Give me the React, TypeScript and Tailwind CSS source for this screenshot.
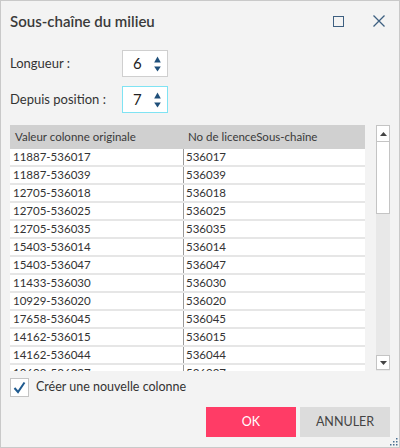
const ROWS: [string, string][] = [
  ["11887-536017", "536017"],
  ["11887-536039", "536039"],
  ["12705-536018", "536018"],
  ["12705-536025", "536025"],
  ["12705-536035", "536035"],
  ["15403-536014", "536014"],
  ["15403-536047", "536047"],
  ["11433-536030", "536030"],
  ["10929-536020", "536020"],
  ["17658-536045", "536045"],
  ["14162-536015", "536015"],
  ["14162-536044", "536044"],
  ["10609-536027", "536027"],
];

const Spin = ({ value, focused }: { value: string; focused?: boolean }) => (
  <div
    className={`w-[46px] h-[27px] bg-white flex items-center border ${focused ? "border-[#7fe3f3]" : "border-[#cfcfcf]"}`}
  >
    <span className="flex-1 pl-[10px] text-[15px] text-[#222]">{value}</span>
    <div className="flex flex-col items-center pr-[6px] gap-[3px]">
      <svg width="7" height="7" viewBox="0 0 7 7"><path d="M3.5 0.5 L6.8 6.5 L0.2 6.5 Z" fill="#1f4f7a" /></svg>
      <svg width="7" height="6" viewBox="0 0 7 6"><path d="M0.2 0.5 L6.8 0.5 L3.5 5.5 Z" fill="#1f4f7a" /></svg>
    </div>
  </div>
);

export default function App() {
  return (
    <div className="w-[400px] h-[448px] border border-[#c9c9c9] bg-[#f3f3f3] flex flex-col font-['Lato',sans-serif] text-[#333] relative overflow-hidden">
      {/* title bar */}
      <div className="h-[40px] flex items-center pl-[9px] pr-[14px] shrink-0">
        <span className="flex-1 text-[15px] font-semibold text-[#3a3a3a]">Sous-chaîne du milieu</span>
        <div className="w-[11px] h-[11px] border-[1.5px] border-[#3d5f80] mr-[29px]" />
        <svg width="12" height="12" viewBox="0 0 12 12">
          <path d="M0.5 0.5 L11.5 11.5 M11.5 0.5 L0.5 11.5" stroke="#3d5f80" strokeWidth="1.3" />
        </svg>
      </div>

      {/* inputs */}
      <div className="flex flex-col gap-[9px] pl-[9px] mt-[9px]">
        <div className="flex items-center">
          <span className="w-[112px] text-[13px]">Longueur :</span>
          <Spin value="6" />
        </div>
        <div className="flex items-center">
          <span className="w-[112px] text-[13px]">Depuis position :</span>
          <Spin value="7" focused />
        </div>
      </div>

      {/* table + scrollbar */}
      <div className="flex mt-[12px] pl-[9px] pr-[9px] gap-[11px]">
        <div className="w-[357px] h-[246px] overflow-hidden">
          <div className="h-[24px] bg-[#d0d0d0] flex items-center text-[11.5px] text-[#3a3a3a]">
            <span className="w-[173px] pl-[5px]">Valeur colonne originale</span>
            <span className="pl-[5px]">No de licenceSous-chaîne</span>
          </div>
          {ROWS.map(([a, b]) => (
            <div key={a} className="h-[18px] flex text-[11.5px] text-[#333] border-b-[2px] border-[#e6e6e6]">
              <span className="w-[173px] bg-white pl-[3px] leading-[16px]">{a}</span>
              <span className="flex-1 bg-white pl-[2px] leading-[16px] border-l border-[#9a9a9a]">{b}</span>
            </div>
          ))}
        </div>
        <div className="w-[14px] h-[246px] flex flex-col bg-[#e8e8e8]">
          <div className="h-[17px] bg-white border border-[#c4c4c4] flex items-center justify-center">
            <svg width="7" height="4" viewBox="0 0 7 4"><path d="M0 4 L3.5 0 L7 4 Z" fill="#444" /></svg>
          </div>
          <div className="h-[72px] bg-white border border-t-0 border-[#c4c4c4]" />
          <div className="flex-1" />
          <div className="h-[15px] mb-[1px] bg-white border border-[#c4c4c4] flex items-center justify-center">
            <svg width="7" height="4" viewBox="0 0 7 4"><path d="M0 0 L7 0 L3.5 4 Z" fill="#444" /></svg>
          </div>
        </div>
      </div>

      {/* checkbox */}
      <div className="flex items-center pl-[9px] mt-[7px] gap-[7px]">
        <div className="w-[19px] h-[19px] bg-white border border-[#c4c4c4] flex items-center justify-center">
          <svg width="13" height="13" viewBox="0 0 13 13">
            <path d="M1.5 7 L5 11 L11.5 1.5" fill="none" stroke="#1f5a8f" strokeWidth="2" />
          </svg>
        </div>
        <span className="text-[12.5px] text-[#333]">Créer une nouvelle colonne</span>
      </div>

      {/* buttons */}
      <div className="flex justify-end gap-[4px] pr-[9px] mt-[10px]">
        <button className="w-[90px] h-[30px] bg-[#ff3c66] text-white text-[12.5px]">OK</button>
        <button className="w-[90px] h-[30px] bg-[#dcdcdc] text-[#444] text-[12.5px]">ANNULER</button>
      </div>

      {/* resize grip */}
      <svg className="absolute right-[1px] bottom-[1px]" width="8" height="8" viewBox="0 0 8 8">
        <rect x="6" y="0" width="1.5" height="1.5" fill="#4a6f92" />
        <rect x="3" y="3" width="1.5" height="1.5" fill="#4a6f92" />
        <rect x="6" y="3" width="1.5" height="1.5" fill="#4a6f92" />
        <rect x="0" y="6" width="1.5" height="1.5" fill="#4a6f92" />
        <rect x="3" y="6" width="1.5" height="1.5" fill="#4a6f92" />
        <rect x="6" y="6" width="1.5" height="1.5" fill="#4a6f92" />
      </svg>
    </div>
  );
}
